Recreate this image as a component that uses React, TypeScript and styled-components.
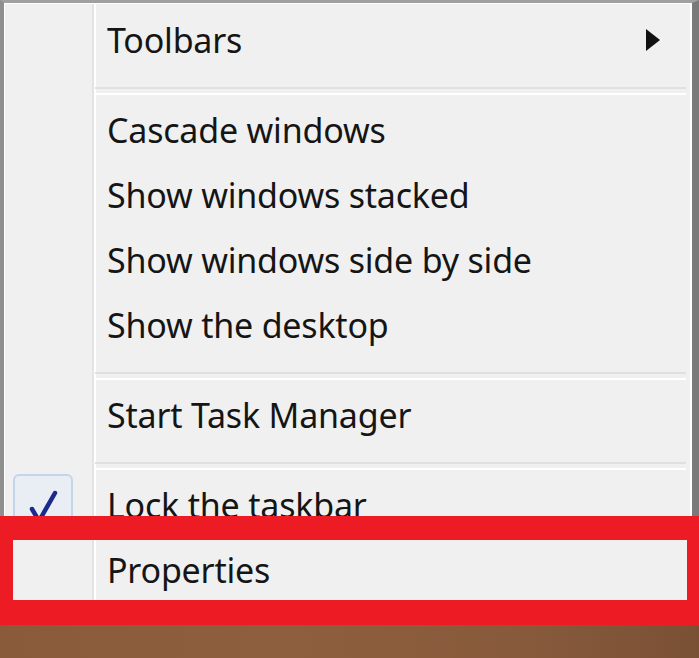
import React from "react";
import styled, { createGlobalStyle } from "styled-components";

const GlobalStyle = createGlobalStyle`
  html, body {
    margin: 0;
    padding: 0;
    width: 699px;
    height: 658px;
    overflow: hidden;
    background: #f0f0f0;
  }
  * { box-sizing: border-box; }
`;

const Screen = styled.div`
  position: relative;
  width: 699px;
  height: 658px;
  display: flex;
  flex-direction: column;
  font-family: "Noto Sans", "Open Sans", sans-serif;
`;

const Menu = styled.div`
  flex: 1;
  display: flex;
  flex-direction: column;
  padding: 4px 0 0 0;
  border-top: 3px solid #a0a0a0;
  border-left: 4px solid #8f8f8f;
  border-right: 7px solid #7a7a7a;
  box-shadow: inset 1px 1px 0 #fff, inset -2px 0 0 #fff;
  background: linear-gradient(
    to right,
    #f0f0f0 0 88px,
    #e2e3e3 88px 90px,
    #ffffff 90px 92px,
    #f0f0f0 92px
  );
`;

const Item = styled.div`
  height: 65px;
  display: grid;
  grid-template-columns: 103px 1fr 47px;
  align-items: center;
`;

const Gutter = styled.div`
  height: 100%;
  display: flex;
  align-items: center;
  padding-left: 9px;
`;

const CheckBox = styled.div`
  width: 60px;
  height: 62px;
  border: 2px solid #c2d5ea;
  border-radius: 6px;
  background: #e9eef4;
  display: flex;
  align-items: center;
  justify-content: center;
`;

const Label = styled.span`
  font-size: 34px;
  color: #151515;
  white-space: nowrap;
  letter-spacing: -0.2px;
`;

const Arrow = styled.svg`
  width: 16px;
  height: 22px;
  display: block;
`;

const Separator = styled.div`
  height: 25px;
  display: flex;
  align-items: flex-start;
  padding: 15px 6px 0 91px;
  &::after {
    content: "";
    flex: 1;
    height: 4px;
    border-top: 2px solid #e0e0e0;
    border-bottom: 2px solid #ffffff;
  }
`;

const Taskbar = styled.div`
  height: 33px;
  background: linear-gradient(to right, #8a5b3b 0%, #8e5f3e 40%, #875a3b 75%, #7a5035 100%);
`;

const Highlight = styled.div`
  position: absolute;
  left: 0;
  top: 516px;
  width: 699px;
  height: 109px;
  border-style: solid;
  border-color: #ed1c24;
  border-width: 24px 12px 25px 13px;
  pointer-events: none;
`;

type Entry = { label: string; submenu?: boolean; checked?: boolean } | "sep";

const entries: Entry[] = [
  { label: "Toolbars", submenu: true },
  "sep",
  { label: "Cascade windows" },
  { label: "Show windows stacked" },
  { label: "Show windows side by side" },
  { label: "Show the desktop" },
  "sep",
  { label: "Start Task Manager" },
  "sep",
  { label: "Lock the taskbar", checked: true },
  { label: "Properties" },
];

export default function App() {
  return (
    <>
      <GlobalStyle />
      <Screen>
        <Menu>
          {entries.map((e, i) =>
            e === "sep" ? (
              <Separator key={i} />
            ) : (
              <Item key={i}>
                <Gutter>
                  {e.checked && (
                    <CheckBox>
                      <svg width="40" height="40" viewBox="0 0 40 40">
                        <path
                          d="M9 24 L16 36 L32 8"
                          fill="none"
                          stroke="#1b2a8c"
                          strokeWidth="4.5"
                          strokeLinejoin="miter"
                          strokeLinecap="round"
                        />
                      </svg>
                    </CheckBox>
                  )}
                </Gutter>
                <Label>{e.label}</Label>
                {e.submenu ? (
                  <Arrow viewBox="0 0 16 22">
                    <polygon points="1,0 15,11 1,22" fill="#111" />
                  </Arrow>
                ) : (
                  <span />
                )}
              </Item>
            )
          )}
        </Menu>
        <Taskbar />
        <Highlight />
      </Screen>
    </>
  );
}
